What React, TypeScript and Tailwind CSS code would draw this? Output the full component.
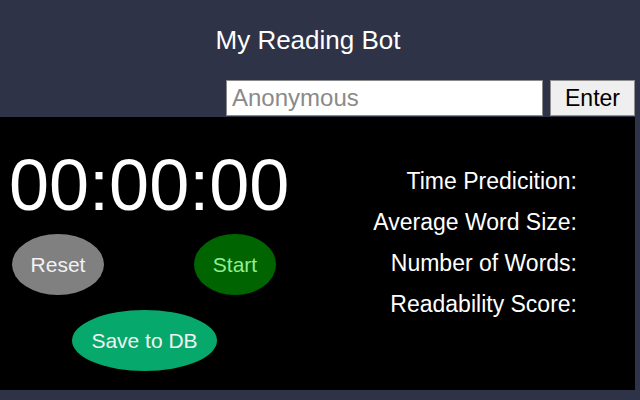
const stats = [
  'Time Predicition:',
  'Average Word Size:',
  'Number of Words:',
  'Readability Score:',
];

export default function App() {
  return (
    <div className="w-[640px] h-[400px] bg-[#2e3347] font-['Liberation_Sans',Arial,sans-serif] overflow-hidden">
      <div className="h-[80px] flex items-center justify-center pr-[24px] pb-[1px]">
        <h1 className="text-[26px] leading-none text-white">My Reading Bot</h1>
      </div>

      <div className="flex justify-end gap-[7px] pr-[5px] h-[37px]">
        <input
          type="text"
          placeholder="Anonymous"
          className="w-[317px] h-[36px] bg-white border border-[#8a8a8a] px-[5px] text-[24px] text-black placeholder:text-[#8a8a8a] outline-none"
        />
        <button className="w-[85px] h-[36px] bg-[#efefef] border border-[#8f8f8f] text-[23px] text-black">
          Enter
        </button>
      </div>

      <div className="w-[635px] h-[273px] bg-black flex">
        <div className="w-[300px] pt-[32px]">
          <div className="pl-[9px] text-[72px] leading-none text-white">00:00:00</div>
          <div className="flex mt-[13px] pl-[12px]">
            <button className="w-[92px] h-[61px] rounded-[50%] bg-[#808080] text-[21px] text-[#f2f2f2] flex items-center justify-center">
              Reset
            </button>
            <button className="ml-[90px] w-[82px] h-[61px] rounded-[50%] bg-[#006400] text-[21px] text-[#90ee90] flex items-center justify-center">
              Start
            </button>
          </div>
          <div className="mt-[15px] pl-[72px]">
            <button className="w-[145px] h-[61px] rounded-[50%] bg-[#07a86b] text-[21px] text-[#f2f2f2] flex items-center justify-center">
              Save to DB
            </button>
          </div>
        </div>
        <div className="flex-1 pt-[44px] pr-[58px] flex flex-col items-end">
          {stats.map((s) => (
            <div key={s} className="text-[23px] leading-[41px] text-white">
              {s}
            </div>
          ))}
        </div>
      </div>
    </div>
  );
}
